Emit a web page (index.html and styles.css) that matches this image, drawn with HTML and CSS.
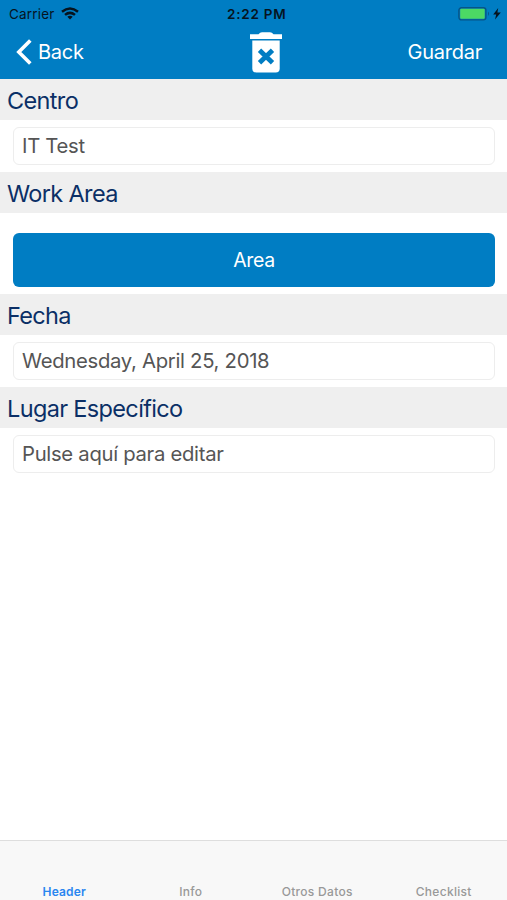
FILE: index.html
```html
<!DOCTYPE html>
<html lang="es">
	<head>
		<meta charset="UTF-8">
		<title>Header</title>
		<meta name="viewport" content="width=device-width, initial-scale=1">
		<link rel="stylesheet" href="styles.css">
	</head>
	<body>
		<div class="screen">
			<header class="top">
				<div class="status">
					<div class="carrier">
						<span>Carrier</span>
						<svg width="18" height="13" viewBox="0 0 18 13" fill="none" stroke="#06141f" stroke-width="2.5">
							<path d="M1 4.7 Q9 -1.8 17 4.7" />
							<path d="M4 7.9 Q9 3.8 14 7.9" />
							<path d="M9 12.4 L6.3 9.7 Q9 7.7 11.7 9.7z" fill="#06141f" stroke="none" />
						</svg>
					</div>
					<span class="clock">2:22 PM</span>
					<svg class="battery" width="44" height="14" viewBox="0 0 44 14">
						<rect x=".9" y=".7" width="27" height="12.2" rx="2.6" fill="none" stroke="#075587" stroke-width="1.4" />
						<rect x="2.2" y="1.8" width="24.5" height="10" rx="1" fill="#4cd964" />
						<path d="M30 4.6 Q32 6.8 30 9z" fill="#075587" />
						<path d="M40.2 1 L35.2 7.6 H38.2 L37 12.4 L42.8 5.6 H39.4z" fill="#06141f" />
					</svg>
				</div>
				<nav class="navbar">
					<a class="back">
						<svg width="16" height="26" viewBox="0 0 16 26" fill="none" stroke="#fff" stroke-width="3.6">
							<path d="M14.3 1.4 L2.8 13 L14.3 24.6" />
						</svg>
						<span>Back</span>
					</a>
					<svg class="trash" width="32" height="41" viewBox="0 0 32 41">
						<path d="M0 2.3 H8.5 Q10 .2 12 .2 H20 Q22 .2 23.5 2.3 H32 V7 H0z" fill="#fff" />
						<path d="M2.3 8.5 H29.7 V36.5 Q29.7 40.5 25.7 40.5 H6.3 Q2.3 40.5 2.3 36.5z" fill="#fff" />
						<path d="M9.5 18.2 L22.5 30.7 M22.5 18.2 L9.5 30.7" stroke="#007dc3" stroke-width="4.8" />
					</svg>
					<a class="save">Guardar</a>
				</nav>
			</header>

			<main class="form">
				<h2 class="title">Centro</h2>
				<div class="row"><div class="field">IT Test</div></div>
				<h2 class="title">Work Area</h2>
				<div class="row row-button"><button class="button">Area</button></div>
				<h2 class="title">Fecha</h2>
				<div class="row"><div class="field">Wednesday, April 25, 2018</div></div>
				<h2 class="title">Lugar Específico</h2>
				<div class="row"><div class="field">Pulse aquí para editar</div></div>
			</main>

			<nav class="tabs">
				<a class="tab active">Header</a>
				<a class="tab">Info</a>
				<a class="tab">Otros Datos</a>
				<a class="tab">Checklist</a>
			</nav>
		</div>
	</body>
</html>
```

FILE: styles.css
```css
html, body {
	margin: 0;
	padding: 0;
	height: 100%;
	font-family: Inter, "Liberation Sans", sans-serif;
}

svg {
	display: block;
}

.screen {
	height: 100vh;
	display: flex;
	flex-direction: column;
	overflow: hidden;
	background-color: #fff;
}

.top {
	height: 79px;
	background-color: #007dc3;
}

.status {
	height: 27px;
	padding: 0 5px 0 9px;
	display: grid;
	grid-template-columns: 218px 1fr auto;
	align-items: center;
	color: #06141f;
	font-size: 13.5px;
}

.carrier {
	display: flex;
	align-items: center;
	gap: 6px;
	letter-spacing: 0.2px;
}

.clock {
	font-weight: 600;
	letter-spacing: 0.75px;
}

.navbar {
	height: 50px;
	padding: 0 25px 0 16px;
	display: grid;
	grid-template-columns: 234px 32px 1fr;
	align-items: center;
	color: #fff;
	font-size: 20px;
	letter-spacing: -0.25px;
}

.back {
	display: flex;
	align-items: center;
	gap: 6px;
}

.save {
	justify-self: end;
}

.form {
	flex: 1;
}

.title {
	margin: 0;
	padding: 0 7px;
	height: 41px;
	line-height: 43px;
	background-color: #efefef;
	color: #0b2f66;
	font-size: 23.5px;
	font-weight: 400;
	letter-spacing: -0.65px;
}

.row {
	padding: 7px 12px 7px 13px;
}

.row-button {
	padding-top: 20px;
}

.field {
	box-sizing: border-box;
	height: 38px;
	line-height: 36px;
	padding: 0 8px;
	border: 1px solid #ededed;
	border-radius: 6px;
	color: #555;
	font-size: 20.3px;
	letter-spacing: -0.3px;
}

.button {
	display: block;
	width: 100%;
	height: 54px;
	padding: 0;
	border: 0;
	border-radius: 6px;
	background-color: #007dc3;
	color: #fff;
	font: inherit;
	font-size: 19.5px;
	letter-spacing: -0.4px;
}

.tabs {
	box-sizing: border-box;
	height: 60px;
	padding-left: 1px;
	border-top: 1px solid #dedede;
	background-color: #f8f8f8;
	display: flex;
	align-items: flex-end;
}

.tab {
	flex: 1;
	text-align: center;
	color: #999;
	font-size: 12px;
	font-weight: 500;
	letter-spacing: 0.3px;
	line-height: 16px;
}

.tab.active {
	color: #2a86f0;
	font-weight: 600;
	letter-spacing: 0.15px;
}
```
